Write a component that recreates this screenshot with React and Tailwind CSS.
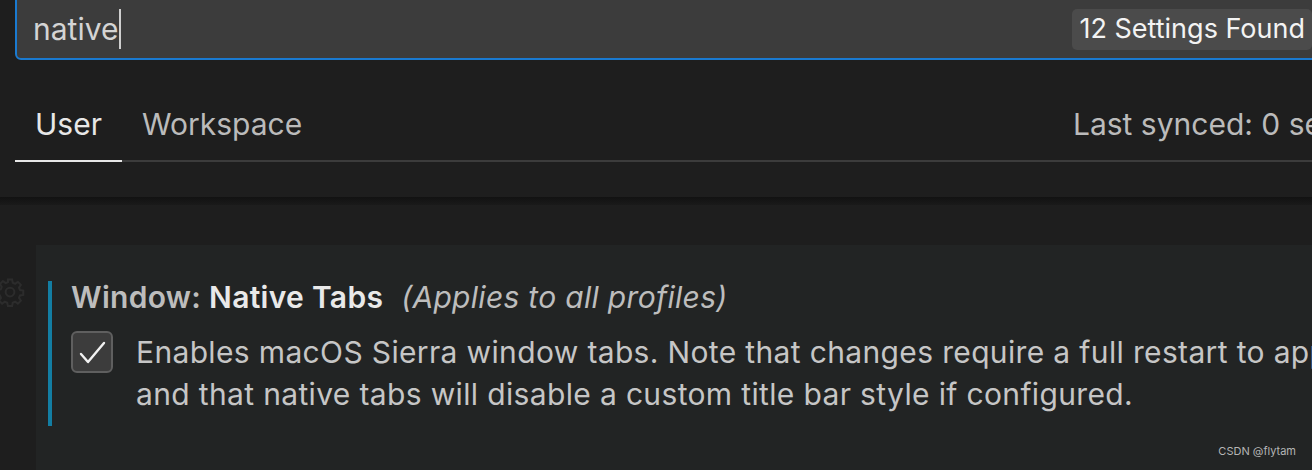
import React from "react";

const FONT = { fontFamily: "Inter, 'Noto Sans', 'Liberation Sans', sans-serif" };

function Gear() {
  return (
    <svg width="30" height="30" viewBox="0 0 24 24" fill="none" stroke="#2c2c2c" strokeWidth="1.6">
      <path d="M12 8.5a3.5 3.5 0 1 0 0 7a3.5 3.5 0 1 0 0-7z" />
      <path d="M10.3 2h3.4l.5 2.6 1.9.8 2.2-1.5 2.4 2.4-1.5 2.2.8 1.9 2.6.5v3.4l-2.6.5-.8 1.9 1.5 2.2-2.4 2.4-2.2-1.5-1.9.8-.5 2.6h-3.4l-.5-2.6-1.9-.8-2.2 1.5-2.4-2.4 1.5-2.2-.8-1.9L2 13.7v-3.4l2.6-.5.8-1.9-1.5-2.2 2.4-2.4 2.2 1.5 1.9-.8z" />
    </svg>
  );
}

function Checkbox() {
  return (
    <div className="flex h-[42px] w-[42px] shrink-0 items-center justify-center rounded-[6px] border-2 border-[#5f5f5f] bg-[#3c3c3c]">
      <svg width="30" height="30" viewBox="0 0 30 30" fill="none" stroke="#f2f2f2" strokeWidth="2.4" strokeLinecap="round" strokeLinejoin="round">
        <path d="M4 17l7 8L27 6" />
      </svg>
    </div>
  );
}

export default function App() {
  return (
    <div className="relative h-[470px] w-[1312px] overflow-hidden bg-[#1e1e1e]" style={FONT}>
      <div className="flex h-[60px] items-end">
        <div className="ml-[15px] flex h-[72px] w-[1305px] shrink-0 items-end rounded-[6px] border-2 border-[#1a7ad0] bg-[#3c3c3c]">
          <div className="flex h-[58px] w-full items-center">
            <span className="ml-[16px] text-[30px] text-[#d4d4d4]">native</span>
            <span className="ml-[1px] h-[40px] w-[2px] bg-[#cfcfcf]" />
            <span className="ml-auto mr-[6px] flex h-[41px] items-center whitespace-nowrap rounded-[5px] bg-[#4b4b4b] px-[7px] text-[27px] text-[#f3f3f3]">
              12 Settings Found
            </span>
          </div>
        </div>
      </div>

      <div className="flex h-[102px] items-stretch">
        <div className="ml-[15px] flex flex-1 border-b-2 border-[#3c3c3c]">
          <div className="-mb-[2px] flex items-center border-b-2 border-[#e7e7e7] px-[20px] pt-[28px] text-[30px] text-[#e7e7e7]">
            User
          </div>
          <div className="flex items-center px-[20px] pt-[28px] text-[30px] text-[#bbbbbb]">Workspace</div>
          <div className="ml-auto flex items-center whitespace-nowrap pt-[28px] text-[30px] text-[#bbbbbb]" style={{ marginRight: -43 }}>
            Last synced: 0 secs
          </div>
        </div>
      </div>

      <div className="h-[35px]" />
      <div className="h-[8px] bg-gradient-to-b from-[#121212] to-[#1a1a1a]" />

      <div className="flex pt-[40px]">
        <div className="flex w-[36px] shrink-0 justify-start pt-[32px]">
          <div className="-ml-[5px]">
            <Gear />
          </div>
        </div>
        <div className="flex-1 bg-[#222424] pb-[60px] pl-[12px] pt-[36px]">
          <div className="flex border-l-4 border-[#137ea3] pl-[19px]">
            <div className="min-w-0">
              <div className="whitespace-nowrap text-[30px] leading-[32px] tracking-[0.3px] text-[#bdbdbd]">
                <span className="font-semibold">Window: </span>
                <span className="font-semibold text-[#e9e9e9]">Native Tabs</span>
                <span className="ml-[18px] italic">(Applies to all profiles)</span>
              </div>
              <div className="mt-[18px] flex">
                <Checkbox />
                <div className="ml-[23px] whitespace-nowrap text-[30px] leading-[42px] tracking-[0.35px] text-[#c6c6c6]">
                  <div>Enables macOS Sierra window tabs. Note that changes require a full restart to apply</div>
                  <div>and that native tabs will disable a custom title bar style if configured.</div>
                </div>
              </div>
              <div className="h-[11px]" />
            </div>
          </div>
        </div>
      </div>

      <div className="absolute bottom-[11px] right-[16px] text-[11px] text-[#b5b5b5]">CSDN @flytam</div>
    </div>
  );
}
